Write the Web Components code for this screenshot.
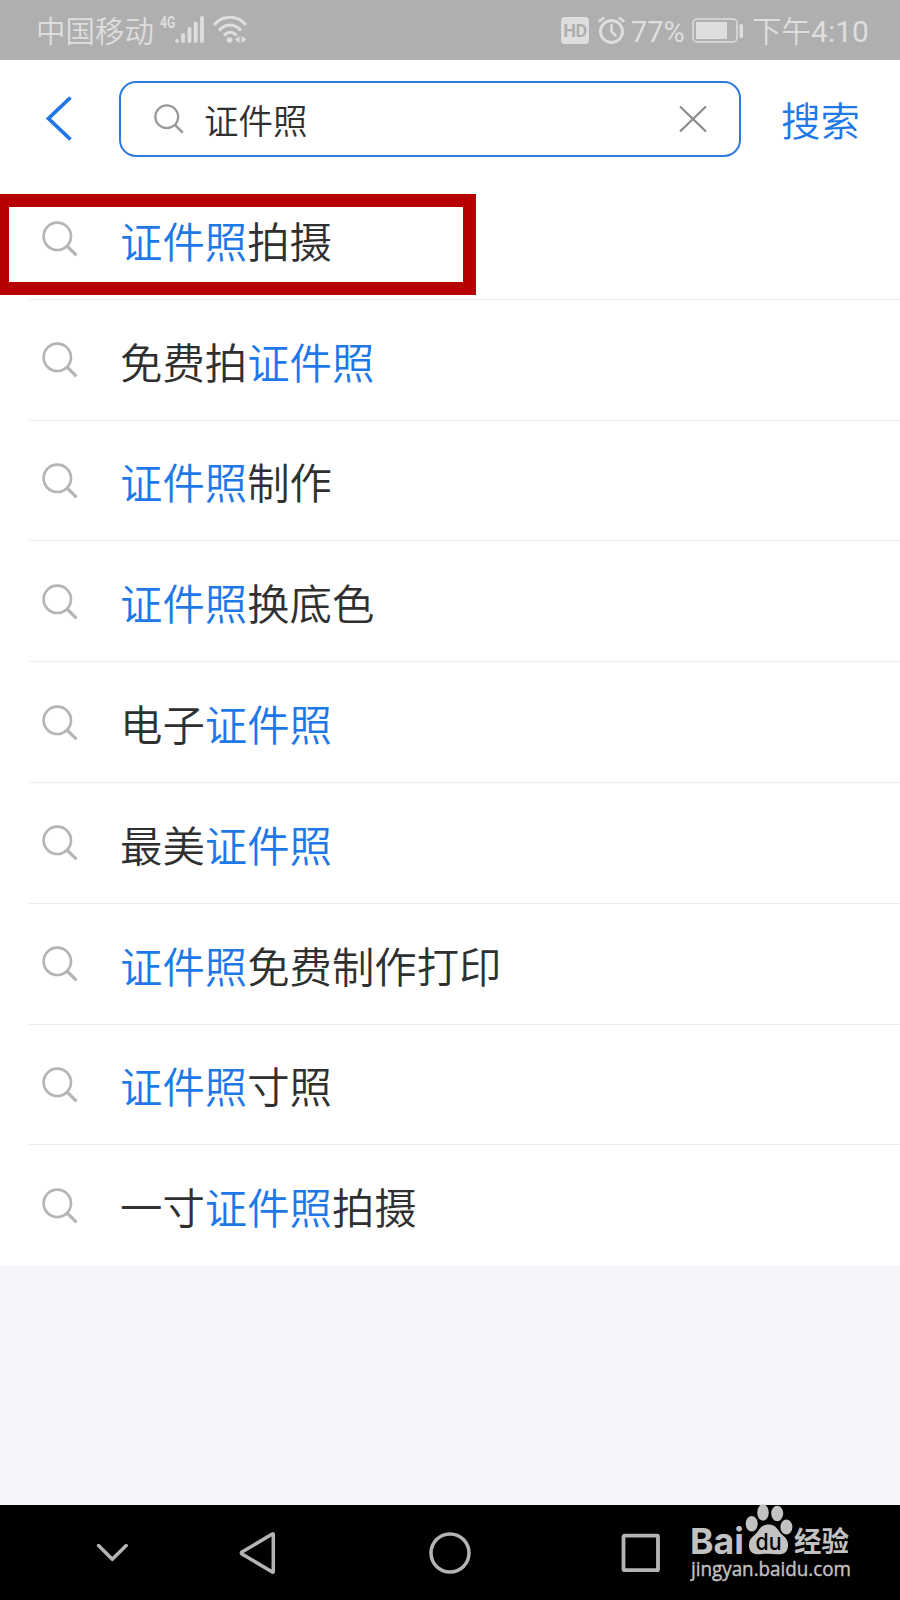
<!DOCTYPE html>
<html lang="zh-CN">
<head>
<meta charset="utf-8">
<title>证件照</title>
<style>
    body {
        margin: 0;
        background: #f4f4f9;
        font-family: "Noto Sans CJK SC", sans-serif;
        color: #303030;
    }
</style>
</head>
<body>
<search-page></search-page>

<script>
const KEYWORD = '证件照';

class StatusBar extends HTMLElement {
    constructor() {
        super();
        this.attachShadow({ mode: 'open' });
        this.shadowRoot.innerHTML = `
            <style>
                :host {
                    display: flex;
                    justify-content: space-between;
                    box-sizing: border-box;
                    height: 60px;
                    padding: 0 29px 0 36px;
                    background: #afafaf;
                    color: #dedede;
                    font: 350 29.500px/64px Roboto, "Noto Sans CJK SC", sans-serif;
                    white-space: nowrap;
                }
                .side { display: flex; }
                .label { width: 118px; }
                .net { font: bold 17px/17px Roboto, sans-serif; width: 17px; margin: 14px 0 0 6px; }
                .net span { display: inline-block; transform: scaleX(.72); transform-origin: left; }
                svg { display: block; }
                .signal { margin: 15px 8px 0 -3px; }
                .wifi { margin-top: 15px; }
                .hd {
                    width: 28px; height: 27px; margin: 17px 9px 0 -1px;
                    border-radius: 4px; background: #dedede; color: #afafaf;
                    font: bold 18px/28px Roboto, sans-serif; text-align: center;
                    letter-spacing: -.500px;
                }
                .alarm { margin: 16px 6px 0 0; }
                .percent { width: 61px; font-weight: 400; font-size: 29px; }
                .battery { margin: 18px 8px 0 0; }
                .time { width: 119px; }
                .time span { font-weight: 400; font-size: 30px; }
            </style>
            <div class="side">
                <span class="label">中国移动</span>
                <span class="net"><span>4G</span></span>
                <svg class="signal" width="31" height="29" viewBox="0 0 31 29" stroke="#dedede" stroke-width="3.800" stroke-linecap="round">
                    <path d="M3 26v0M9 20v6M15.500 14v12M21.700 8.500v17.500M28 3v23"/>
                </svg>
                <svg class="wifi" width="36" height="30" viewBox="0 0 36 30" fill="none" stroke="#dedede" stroke-width="3.200" stroke-linecap="round">
                    <path d="M2 9c8-9 22-9 30 0M7 14.500c6-6 14-6 20 0M12 19.500c3-3 7.500-3 10.500 0"/>
                    <circle cx="16.500" cy="25" r="2.800" fill="#dedede" stroke="none"/>
                    <path d="M26.500 21v7l-4.500-3.500zM28.500 21v7l5-3.500z" fill="#dedede" stroke="none"/>
                </svg>
            </div>
            <div class="side">
                <span class="hd">HD</span>
                <svg class="alarm" width="27" height="29" viewBox="0 0 27 29" fill="none" stroke="#dedede" stroke-width="3" stroke-linecap="round">
                    <circle cx="13.500" cy="15.500" r="11"/>
                    <path d="M1.500 5l4-3M25.500 5l-4-3M13.500 9v6.500l4 4" stroke-width="2.500"/>
                </svg>
                <span class="percent">77%</span>
                <svg class="battery" width="52" height="26" viewBox="0 0 52 26" fill="#dedede">
                    <rect x="1" y="1" width="44" height="23" rx="4" fill="none" stroke="#dedede" stroke-width="1.500"/>
                    <rect x="4" y="4" width="31" height="17"/>
                    <rect x="47.500" y="6" width="3.500" height="14" rx="1.500"/>
                </svg>
                <span class="time">下午<span>4:10</span></span>
            </div>
        `;
    }
}

class SearchIcon extends HTMLElement {
    constructor() {
        super();
        this.attachShadow({ mode: 'open' });
        this.shadowRoot.innerHTML = `
            <style>
                :host { display: block; flex: none; width: 36px; height: 36px; color: #b5b5b5; }
                svg { display: block; width: 100%; height: 100%; }
            </style>
            <svg viewBox="0 0 36 36" fill="none" stroke="currentColor" stroke-width="2.700">
                <circle cx="15.300" cy="15.300" r="13.700"/>
                <path d="M25 25l9.500 9.300" stroke-width="3.200"/>
            </svg>
        `;
    }
}

class SearchHeader extends HTMLElement {
    constructor() {
        super();
        this.attachShadow({ mode: 'open' });
        this.shadowRoot.innerHTML = `
            <style>
                :host {
                    display: flex;
                    align-items: flex-start;
                    box-sizing: border-box;
                    height: 119px;
                    padding: 21px 40px 0 45px;
                    background: #fff;
                }
                svg { display: block; flex: none; }
                .back { margin: 15px 46px 0 0; }
                .field {
                    display: flex;
                    align-items: center;
                    box-sizing: border-box;
                    width: 622px;
                    height: 76px;
                    padding: 0 32px 0 33px;
                    border: 2.500px solid #2f7bdc;
                    border-radius: 17px;
                    font-weight: 350;
                    font-size: 34.500px;
                    line-height: 70px;
                }
                search-icon { width: 30px; height: 30px; color: #999; margin-right: 20px; }
                .text { flex: 1; }
                .action { margin-left: auto; font-weight: 350; font-size: 39.500px; line-height: 75px; color: #1f78e8; }
            </style>
            <svg class="back" width="28" height="46" viewBox="0 0 28 46" fill="none" stroke="#2277e6" stroke-width="3.800">
                <path d="M25.500 1.500L3.500 22.500L25.500 43.500"/>
            </svg>
            <div class="field">
                <search-icon></search-icon>
                <span class="text"><slot></slot></span>
                <svg width="28" height="26" viewBox="0 0 28 26" stroke="#8c8c8c" stroke-width="2.200"><path d="M1 .500l26 25M27 .500l-26 25"/></svg>
            </div>
            <span class="action">搜索</span>
        `;
    }
}

class SuggestItem extends HTMLElement {
    constructor() {
        super();
        this.attachShadow({ mode: 'open' });
    }

    connectedCallback() {
        // every occurrence of the keyword is shown in blue
        const html = this.getAttribute('text').split(KEYWORD).join(`<b>${KEYWORD}</b>`);
        this.shadowRoot.innerHTML = `
            <style>
                :host {
                    position: relative;
                    display: flex;
                    align-items: center;
                    height: 120.800px;
                    font-weight: 350;
                    font-size: 42.400px;
                    line-height: 60px;
                }
                search-icon { margin: 0 42px 0 42px; }
                .text { padding-top: 1px; }
                b { font-weight: inherit; color: #1f78e8; }
                .line { position: absolute; left: 29px; right: 0; bottom: 0; height: 1px; background: #ededed; }
                :host(:last-child) .line { display: none; }
                .mark { display: none; }
                :host([marked]) .mark {
                    display: block;
                    position: absolute;
                    left: 0;
                    top: 15px;
                    box-sizing: border-box;
                    width: 476px;
                    height: 101px;
                    border: 13px solid #b90000;
                    border-left-width: 9.500px;
                }
            </style>
            <search-icon></search-icon>
            <span class="text">${html}</span>
            <div class="line"></div>
            <div class="mark"></div>
        `;
    }
}

class NavBar extends HTMLElement {
    constructor() {
        super();
        this.attachShadow({ mode: 'open' });
        this.shadowRoot.innerHTML = `
            <style>
                :host {
                    display: flex;
                    align-items: center;
                    box-sizing: border-box;
                    height: 95px;
                    padding-left: 96px;
                    background: #000;
                }
                svg {
                    display: block;
                    flex: none;
                    fill: none;
                    stroke: #b4b4b4;
                    stroke-width: 3.500;
                    stroke-linecap: round;
                    stroke-linejoin: round;
                }
                .down { margin-right: 109px; }
                .back { margin-right: 153px; }
                .home { margin-right: 150px; }
            </style>
            <svg class="down" width="33" height="20" viewBox="0 0 33 20"><path d="M2.500 2.500L16.300 16.300L30.200 2.500"/></svg>
            <svg class="back" width="38" height="44" viewBox="0 0 38 44"><path d="M35.300 3.500v37q0 1-1 .500L4 23q-1.300-1 0-2L34.300 3q1-.500 1 .500z"/></svg>
            <svg class="home" width="42" height="42" viewBox="0 0 42 42"><circle cx="21" cy="21" r="19"/></svg>
            <svg width="40" height="40" viewBox="0 0 40 40"><rect x="2.500" y="2.700" width="34.500" height="34.500" rx="1" stroke-width="3.800"/></svg>
        `;
    }
}

class BaiduMark extends HTMLElement {
    constructor() {
        super();
        this.attachShadow({ mode: 'open' });
        this.shadowRoot.innerHTML = `
            <style>
                :host { display: block; width: 166px; height: 80px; }
                svg { display: block; }
                text { fill: #c2c2c2; }
            </style>
            <svg width="166" height="80" viewBox="0 0 166 80" fill="#c2c2c2">
                <text x="0" y="49.500" font-family="Inter" font-weight="700" font-size="36" textLength="54" lengthAdjust="spacingAndGlyphs">Bai</text>
                <ellipse cx="61.700" cy="19.700" rx="6" ry="7.700"/>
                <ellipse cx="73" cy="8.500" rx="5.800" ry="8.300"/>
                <ellipse cx="87.200" cy="9.500" rx="6" ry="7.800"/>
                <ellipse cx="96.400" cy="23" rx="6" ry="7.500"/>
                <path d="M78.500 20.500c-8 0-9 6-13.500 10-4.500 3.500-6.500 7-6 12 .600 6 5 8.500 11 7.700 5-.700 12-.700 17 0 6 .800 10.500-1.700 11-7.700.500-5-1.500-8.500-6-12-4.500-4-5.500-10-13.500-10z"/>
                <text x="65.500" y="46" font-family="Inter" font-weight="500" font-size="23" textLength="26" lengthAdjust="spacingAndGlyphs" style="fill:#000">du</text>
                <text x="104" y="47.500" font-family="Noto Sans CJK SC" font-weight="bold" font-size="28" textLength="55" lengthAdjust="spacingAndGlyphs">经验</text>
                <text x="1" y="71.500" font-family="Open Sans" font-size="19.500" textLength="160" lengthAdjust="spacingAndGlyphs" stroke="#c2c2c2" stroke-width=".4">jingyan.baidu.com</text>
            </svg>
        `;
    }
}

class SearchPage extends HTMLElement {
    constructor() {
        super();
        this.attachShadow({ mode: 'open' });
        this.items = [
            '证件照拍摄', '免费拍证件照', '证件照制作',
            '证件照换底色', '电子证件照', '最美证件照',
            '证件照免费制作打印', '证件照寸照', '一寸证件照拍摄'
        ];
        this.render();
    }

    render() {
        this.shadowRoot.innerHTML = `
            <style>
                :host {
                    position: relative;
                    display: flex;
                    flex-direction: column;
                    width: 900px;
                    height: 1600px;
                    overflow: hidden;
                }
                .list { background: #fff; }
                nav-bar { margin-top: auto; }
                /* watermark floats over the navigation bar */
                baidu-mark { position: absolute; right: 44px; bottom: 16px; }
            </style>
            <status-bar></status-bar>
            <search-header>${KEYWORD}</search-header>
            <div class="list">
                ${this.items.map((text, i) => `<suggest-item text="${text}" ${i === 0 ? 'marked' : ''}></suggest-item>`).join('')}
            </div>
            <nav-bar></nav-bar>
            <baidu-mark></baidu-mark>
        `;
    }
}

customElements.define('search-icon', SearchIcon);
customElements.define('status-bar', StatusBar);
customElements.define('search-header', SearchHeader);
customElements.define('suggest-item', SuggestItem);
customElements.define('nav-bar', NavBar);
customElements.define('baidu-mark', BaiduMark);
customElements.define('search-page', SearchPage);
</script>
</body>
</html>
